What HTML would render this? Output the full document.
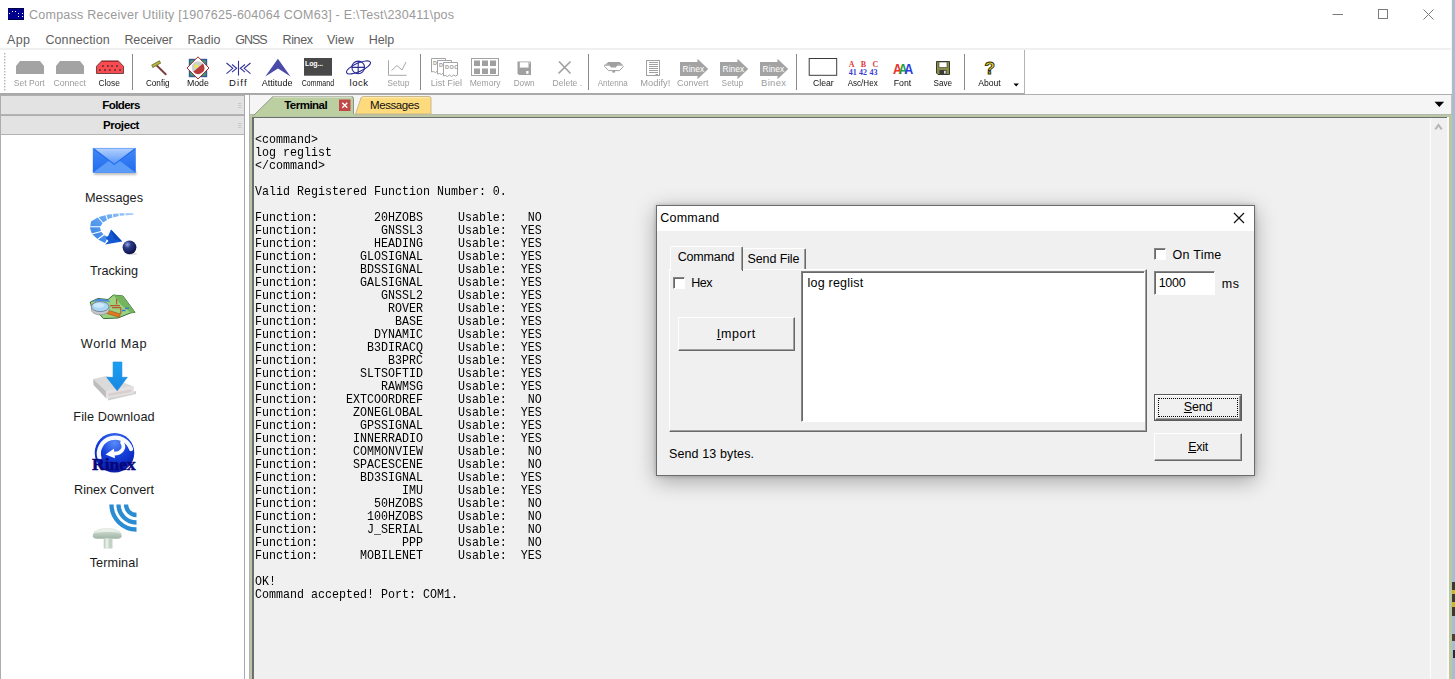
<!DOCTYPE html>
<html><head><meta charset="utf-8"><title>Compass Receiver Utility</title>
<style>
html,body{margin:0;padding:0;}
body{width:1455px;height:679px;overflow:hidden;background:#fff;position:relative;font-family:"Liberation Sans",sans-serif;font-size:12px;color:#000;}
.a{position:absolute;}
.t{position:absolute;white-space:pre;line-height:1;}
.tl{position:absolute;white-space:pre;line-height:10px;font-size:9.5px;height:10px;width:60px;text-align:center;transform-origin:50% 50%;}
.mn{position:absolute;top:33px;font-size:12.5px;line-height:15px;color:#5e5e5e;white-space:pre;}
.sb{position:absolute;left:0;width:228px;text-align:center;font-size:12.7px;line-height:14px;color:#1a1a1a;white-space:pre;letter-spacing:.3px;}
.sep{position:absolute;top:54px;width:1px;height:36px;background:#8c8c8c;}
#term{position:absolute;left:255px;top:133.5px;margin:0;font-family:"Liberation Mono",monospace;font-size:12.4px;transform:scaleX(.9409);transform-origin:0 0;line-height:13px;color:#000;white-space:pre;letter-spacing:0;}
.dl{position:absolute;white-space:pre;font-size:12.5px;line-height:14px;color:#000;}
u{text-decoration:underline;text-underline-offset:1px;}
</style></head><body>

<div class="a" style="left:0;top:0;width:1452px;height:30px;background:#fff"></div>
<svg class="a" style="left:8px;top:8px" width="16" height="12" viewBox="0 0 16 12"><rect width="16" height="12" fill="#00008e"></rect><rect width="16" height="1" fill="#000048"></rect><rect y="11" width="16" height="1" fill="#000048"></rect><g fill="#fff"><rect x="1" y="5" width="1" height="1"></rect><rect x="4" y="3" width="1" height="1"></rect><rect x="7" y="3" width="1" height="1"></rect><rect x="10" y="5" width="1" height="1"></rect><rect x="14" y="5" width="1" height="1"></rect><rect x="10" y="8" width="1" height="1"></rect><rect x="14" y="8" width="1" height="1"></rect></g></svg>
<div class="t" style="left:29px;top:8px;font-size:12.5px;line-height:15px;color:#9a9a9a;letter-spacing:.25px">Compass Receiver Utility [1907625-604064 COM63] - E:\Test\230411\pos</div>
<svg class="a" style="left:1330px;top:4px" width="115" height="22" viewBox="0 0 115 22" fill="none" stroke="#7a7a7a" stroke-width="1"><path d="M2.500 10.500h10.500"></path><rect x="48.5" y="5.5" width="9" height="9"></rect><path d="M93.5 5.5l10 10M103.5 5.5l-10 10"></path></svg>
<div class="mn" style="left: 7px; letter-spacing: 0.375px;">App</div>
<div class="mn" style="left: 45.4px; letter-spacing: 0.117px;">Connection</div>
<div class="mn" style="left: 124.5px; letter-spacing: -0.161px;">Receiver</div>
<div class="mn" style="left: 187.5px; letter-spacing: 0.082px;">Radio</div>
<div class="mn" style="left: 235.2px; letter-spacing: -0.979px;">GNSS</div>
<div class="mn" style="left: 282.5px; letter-spacing: -0.367px;">Rinex</div>
<div class="mn" style="left: 327px; letter-spacing: -0.058px;">View</div>
<div class="mn" style="left: 368.7px; letter-spacing: -0.073px;">Help</div>
<div class="a" style="left:0;top:48px;width:1452px;height:2px;background:#f0f0f0"></div>
<div class="a" style="left:0;top:50px;width:1024px;height:43px;background:#fff"></div>
<div class="a" style="left:1024px;top:50px;width:1px;height:44px;background:#b4b4b4"></div>
<div class="a" style="left:0;top:93px;width:1025px;height:2px;background:#a9a9a9"></div>
<div class="a" style="left:1025px;top:94px;width:427px;height:1px;background:#b0b0b0"></div>
<svg class="a" style="left:4px;top:53px" width="3" height="40" fill="#b5b5b5"><rect x="0" y="0" width="1.4" height="1.4"></rect><rect x="0" y="3" width="1.4" height="1.4"></rect><rect x="0" y="6" width="1.4" height="1.4"></rect><rect x="0" y="9" width="1.4" height="1.4"></rect><rect x="0" y="12" width="1.4" height="1.4"></rect><rect x="0" y="15" width="1.4" height="1.4"></rect><rect x="0" y="18" width="1.4" height="1.4"></rect><rect x="0" y="21" width="1.4" height="1.4"></rect><rect x="0" y="24" width="1.4" height="1.4"></rect><rect x="0" y="27" width="1.4" height="1.4"></rect><rect x="0" y="30" width="1.4" height="1.4"></rect><rect x="0" y="33" width="1.4" height="1.4"></rect><rect x="0" y="36" width="1.4" height="1.4"></rect></svg>
<div class="sep" style="left:132px"></div>
<div class="sep" style="left:420px"></div>
<div class="sep" style="left:588px"></div>
<div class="sep" style="left:796px"></div>
<div class="sep" style="left:964px"></div>
<div class="tl" id="tl0" style="left:-0.5px;top:78.4px;color:#9c9c9c"><span style="display: inline-block; transform: scaleX(0.903);">Set Port</span></div>
<div class="tl" id="tl1" style="left:40px;top:78.4px;color:#9c9c9c"><span style="display: inline-block; transform: scaleX(0.9183);">Connect</span></div>
<div class="tl" id="tl2" style="left:79.5px;top:78.4px;color:#222"><span style="display: inline-block; transform: scaleX(0.8849);">Close</span></div>
<div class="tl" id="tl3" style="left:127.80000000000001px;top:77.8px;color:#111"><span style="display: inline-block; transform: scaleX(0.8555);">Config</span></div>
<div class="tl" id="tl4" style="left:168px;top:78.4px;color:#111"><span style="display: inline-block; transform: scaleX(0.9257);">Mode</span></div>
<div class="tl" id="tl5" style="left:207.8px;top:78.4px;color:#111"><span style="display: inline-block; letter-spacing: 1.135px; margin-right: -1.135px;">Diff</span></div>
<div class="tl" id="tl6" style="left:247.39999999999998px;top:78.4px;color:#111"><span style="display: inline-block; transform: scaleX(0.9529);">Attitude</span></div>
<div class="tl" id="tl7" style="left:288px;top:78.4px;color:#111"><span style="display: inline-block; transform: scaleX(0.7347);">Command</span></div>
<div class="tl" id="tl8" style="left:328.8px;top:78.4px;color:#111"><span style="display: inline-block; letter-spacing: 0.498px; margin-right: -0.498px;">lock</span></div>
<div class="tl" id="tl9" style="left:368px;top:78.4px;color:#9c9c9c"><span style="display: inline-block; transform: scaleX(0.8941);">Setup</span></div>
<div class="tl" id="tl10" style="left:416.4px;top:78.4px;color:#9c9c9c"><span style="display: inline-block; transform: scaleX(0.9531);">List Fiel</span></div>
<div class="tl" id="tl11" style="left:455.4px;top:78.4px;color:#9c9c9c"><span style="display: inline-block; transform: scaleX(0.8976);">Memory</span></div>
<div class="tl" id="tl12" style="left:494.5px;top:78.4px;color:#9c9c9c"><span style="display: inline-block; transform: scaleX(0.8643);">Down</span></div>
<div class="tl" id="tl13" style="left:537.8px;top:78.4px;color:#9c9c9c"><span style="display: inline-block; transform: scaleX(0.9008);">Delete .</span></div>
<div class="tl" id="tl14" style="left:583px;top:77.8px;color:#9c9c9c"><span style="display: inline-block; transform: scaleX(0.8473);">Antenna</span></div>
<div class="tl" id="tl15" style="left:625px;top:78.4px;color:#9c9c9c"><span style="display: inline-block; transform: scaleX(0.9796);">Modify!</span></div>
<div class="tl" id="tl16" style="left:663px;top:78.4px;color:#9c9c9c"><span style="display: inline-block; transform: scaleX(0.9469);">Convert</span></div>
<div class="tl" id="tl17" style="left:702.8px;top:78.4px;color:#9c9c9c"><span style="display: inline-block; transform: scaleX(0.87);">Setup</span></div>
<div class="tl" id="tl18" style="left:743.5px;top:78.4px;color:#9c9c9c"><span style="display: inline-block; letter-spacing: 0.309px; margin-right: -0.309px;">Binex</span></div>
<div class="tl" id="tl19" style="left:793.4px;top:78.4px;color:#111"><span style="display: inline-block; transform: scaleX(0.9118);">Clear</span></div>
<div class="tl" id="tl20" style="left:833px;top:78.4px;color:#111"><span style="display: inline-block; transform: scaleX(0.8481);">Asc/Hex</span></div>
<div class="tl" id="tl21" style="left:873px;top:78.4px;color:#111"><span style="display: inline-block; transform: scaleX(0.9203);">Font</span></div>
<div class="tl" id="tl22" style="left:912.8px;top:78.4px;color:#111"><span style="display: inline-block; transform: scaleX(0.8543);">Save</span></div>
<div class="tl" id="tl23" style="left:959.8px;top:78.4px;color:#111"><span style="display: inline-block; transform: scaleX(0.9062);">About</span></div>
<svg class="a" style="left:0;top:50px" width="1024" height="43" viewBox="0 50 1024 43">
<path d="M16 74V66l4-5h20l4 5v8z" fill="#a3a3a3"></path>
<path d="M56 74V66l4-5h20l4 5v8z" fill="#a3a3a3"></path>
<path d="M96.500 73.500V66.300l5-5.200h17l5 5.200v7.200z" fill="#fb4a50" stroke="#5c3a3a" stroke-width=".9"></path>
<path d="M101.500 61.300h17" stroke="#a02c2c" stroke-width="1.200"></path>
<g fill="#5a3434"><rect x="102.0" y="65.200" width="1.800" height="1.700"></rect><rect x="107.0" y="65.200" width="1.800" height="1.700"></rect><rect x="111.1" y="65.200" width="1.800" height="1.700"></rect><rect x="116.0" y="65.200" width="1.800" height="1.700"></rect><rect x="99.0" y="69.200" width="1.800" height="1.700"></rect><rect x="104.1" y="69.200" width="1.800" height="1.700"></rect><rect x="108.89999999999999" y="69.200" width="1.800" height="1.700"></rect><rect x="114.1" y="69.200" width="1.800" height="1.700"></rect><rect x="119.1" y="69.200" width="1.800" height="1.700"></rect></g>
<path d="M157 65.800L165.700 74.300" stroke="#7a3c3c" stroke-width="1.900" stroke-linecap="round"></path>
<path d="M152 66.400L160.300 61.800" stroke="#6e6e2c" stroke-width="3.400"></path>
<path d="M152.600 66.100L159.700 62.100" stroke="#b4b440" stroke-width="1.900"></path>
<rect x="189.5" y="59.5" width="17" height="17" fill="#3aa070" stroke="#3a569a" stroke-width="1.4"></rect>
<path d="M198 56.8L209 68 198 79 187 68z" fill="#fff" stroke="#a03030" stroke-width="1"></path>
<circle cx="198" cy="67.5" r="6.3" fill="#cfcfcf"></circle>
<path d="M204.2 66.2A6.3 6.3 0 0 1 193.3 71.8L203 63.5z" fill="#b83a3a"></path>
<path d="M195 64.2l4 1.8-4 2.2z" fill="#f4f020"></path>
<g fill="none" stroke="#333399" stroke-width="1.1"><path d="M238.5 60.8V75.6"></path><path d="M226.500 63l6.300 5.300-6.300 5.300M232 64.500l4.700 3.800-4.700 3.800"></path><path d="M250.500 63l-6.300 5.300 6.300 5.300M245 64.500l-4.700 3.800 4.700 3.800"></path></g>
<path d="M277.9 58.8L290.5 76.4 278 68.5 265.3 76.4z" fill="#4a4aa8"></path>
<rect x="304" y="58" width="28" height="17.700" fill="#484848"></rect>
<text x="305" y="66" font-family="Liberation Sans" ,sans-serif="" font-size="7" font-weight="bold" fill="#fff" textLength="18" lengthAdjust="spacing">Log...</text>
<g fill="none" stroke="#2a2a9a" stroke-width="1.1"><circle cx="358.2" cy="67.4" r="6.3"></circle><path d="M358.2 61v12.8M351.9 67.4h12.6"></path><ellipse cx="358.5" cy="67.4" rx="13" ry="4.2" transform="rotate(-24 358.5 67.4)"></ellipse></g>
<g fill="none" stroke="#a8a8a8" stroke-width="1"><path d="M388.5 60.3V75.3H406.6"></path><path d="M391.5 70.5l5.5-5 5 4.5 4-8"></path></g>
<path d="M431.5 58.5h14v12.5l-2 1-2-1-2 1.5-2-1.5-2 1.5-2-1-2 .5z" fill="#fff" stroke="#a3a3a3" stroke-width="1"></path>
<path d="M437.5 60.5h14v12.5l-2 1-2-1-2 1.5-2-1.5-2 1.5-2-1-2 .5z" fill="#fff" stroke="#a3a3a3" stroke-width="1"></path>
<path d="M443.5 62.5h14v12.5l-2 1-2-1-2 1.5-2-1.5-2 1.5-2-1-2 .5z" fill="#fff" stroke="#a3a3a3" stroke-width="1"></path>
<text x="433" y="64.5" font-family="Liberation Sans" ,sans-serif="" font-size="5.500" font-weight="bold" fill="#9a9a9a">D</text><text x="439" y="66.5" font-family="Liberation Sans" ,sans-serif="" font-size="5.500" font-weight="bold" fill="#9a9a9a">D</text><text x="445" y="68.7" font-family="Liberation Sans" ,sans-serif="" font-size="5.500" font-weight="bold" fill="#9a9a9a" letter-spacing=".5">DOC</text>
<rect x="471.5" y="58.5" width="27" height="17" fill="#fff" stroke="#a3a3a3" stroke-width="1"></rect>
<g fill="#a0a0a0"><rect x="474" y="60.5" width="6" height="5.5"></rect><rect x="474" y="68.5" width="6" height="5.5"></rect><rect x="482" y="60.5" width="6" height="5.5"></rect><rect x="482" y="68.5" width="6" height="5.5"></rect><rect x="490" y="60.5" width="6" height="5.5"></rect><rect x="490" y="68.5" width="6" height="5.5"></rect></g>
<path d="M517.5 61.5h13.5v13.4h-12l-1.5-1.5z" fill="#a0a0a0"></path><rect x="519.800" y="62.300" width="8.700" height="5.300" fill="#fff"></rect><rect x="526.200" y="71" width="2.300" height="2.800" fill="#fff"></rect><rect x="529.2" y="62.3" width="1" height="1" fill="#fff"></rect>
<g stroke="#a0a0a0" stroke-width="1.6" fill="none"><path d="M559 61.5L570.5 73.5M570.5 61.5L558.5 73.5"></path></g>
<path d="M608.400 62h11.200l3 2.700h-5l-1.800 2.900h-4.800l-1.800-2.900h-4.100z" fill="#a0a0a0"></path><path d="M604 65.200h19M604.300 66.300l4.400 4.300h10.800l4.200-4.300" fill="none" stroke="#a0a0a0" stroke-width="1"></path><rect x="612.300" y="70.600" width="2.800" height="2" fill="#a0a0a0"></rect>
<rect x="646.500" y="60.500" width="13" height="15" fill="#fff" stroke="#a0a0a0" stroke-width="1"></rect><g fill="#a0a0a0"><rect x="649" y="62" width="9" height="1"></rect><rect x="649" y="64" width="9" height="1"></rect><rect x="649" y="66" width="9" height="1"></rect><rect x="649" y="68" width="9" height="1"></rect><rect x="649" y="70" width="9" height="1"></rect><rect x="649" y="72" width="9" height="1"></rect><rect x="655.500" y="74" width="2.500" height="1"></rect></g>
<path d="M680 62h17.500v-3.200l10.700 10.200-10.700 10.200v-3.200H680z" fill="#a3a3a3"></path>
<text x="682.6" y="71.700" font-family="Liberation Sans" ,sans-serif="" font-size="9" fill="#fff" textLength="21.500" lengthAdjust="spacingAndGlyphs">Rinex</text>
<path d="M720 62h17.500v-3.200l10.700 10.200-10.700 10.200v-3.200H720z" fill="#a3a3a3"></path>
<text x="722.6" y="71.700" font-family="Liberation Sans" ,sans-serif="" font-size="9" fill="#fff" textLength="21.500" lengthAdjust="spacingAndGlyphs">Rinex</text>
<path d="M760 62h17.500v-3.200l10.700 10.200-10.700 10.200v-3.200H760z" fill="#a3a3a3"></path>
<text x="762.6" y="71.700" font-family="Liberation Sans" ,sans-serif="" font-size="9" fill="#fff" textLength="21.500" lengthAdjust="spacingAndGlyphs">Rinex</text>
<rect x="809.2" y="58.500" width="27.500" height="16.800" fill="#fff" stroke="#3c3c3c" stroke-width="1"></rect>
<text x="848.7" y="66.500" font-family="'Liberation Serif',serif" font-size="8" font-weight="bold" fill="#e03c3c">A</text>
<text x="860.8" y="66.500" font-family="'Liberation Serif',serif" font-size="8" font-weight="bold" fill="#e03c3c">B</text>
<text x="872.4" y="66.500" font-family="'Liberation Serif',serif" font-size="8" font-weight="bold" fill="#e03c3c">C</text>
<text x="848.7" y="75" font-family="'Liberation Serif',serif" font-size="8.500" font-weight="bold" fill="#3c3cd2" textLength="8" lengthAdjust="spacingAndGlyphs">41</text>
<text x="858.9" y="75" font-family="'Liberation Serif',serif" font-size="8.500" font-weight="bold" fill="#3c3cd2" textLength="8" lengthAdjust="spacingAndGlyphs">42</text>
<text x="869.5" y="75" font-family="'Liberation Serif',serif" font-size="8.500" font-weight="bold" fill="#3c3cd2" textLength="8" lengthAdjust="spacingAndGlyphs">43</text>
<text x="893" y="73.800" font-family="Liberation Sans" ,sans-serif="" font-size="14" font-weight="bold" fill="#e83030" textLength="9" lengthAdjust="spacingAndGlyphs">A</text>
<text x="898.5" y="73.800" font-family="Liberation Sans" ,sans-serif="" font-size="14" font-weight="bold" fill="#20a040" textLength="9" lengthAdjust="spacingAndGlyphs">A</text>
<text x="904.3" y="73.800" font-family="Liberation Sans" ,sans-serif="" font-size="14" font-weight="bold" fill="#3040e0" textLength="9" lengthAdjust="spacingAndGlyphs">A</text>
<path d="M936.500 61.500h13v13h-11.500l-1.500-1.500z" fill="#8c8c4a" stroke="#3a3a2a" stroke-width="1"></path><rect x="939" y="62" width="8" height="5.500" fill="#fff" stroke="#3a3a2a" stroke-width=".6"></rect><rect x="939.500" y="70" width="7" height="4" fill="#3a3a3a"></rect><rect x="944" y="70.800" width="1.800" height="2.800" fill="#ddd"></rect>
<text x="984.5" y="73.800" font-family="Liberation Sans" ,sans-serif="" font-size="16" font-weight="bold" fill="#f0e020" stroke="#2a2a10" stroke-width=".9" textLength="10.500" lengthAdjust="spacingAndGlyphs">?</text>
<path d="M1013.500 83.600h5.400l-2.700 2.900z" fill="#000"></path>
</svg>
<div class="a" style="left:0;top:95px;width:245px;height:584px;background:#fff"></div>
<div class="a" style="left:0;top:95px;width:1px;height:584px;background:#adadad"></div>
<div class="a" style="left:244px;top:95px;width:1px;height:584px;background:#ababab"></div>
<div class="a" style="left:249px;top:95px;width:1px;height:584px;background:#b2b2b2"></div>
<div class="a" style="left:1px;top:95px;width:243px;height:20px;background:#e3e3e3;border-top:1.500px solid #aeaeae;border-bottom:1px solid #b4b4b4;box-sizing:border-box"></div>
<div class="t hd" style="left: 1px; width: 240px; text-align: center; top: 99px; font-size: 11.5px; font-weight: bold; line-height: 13px; letter-spacing: -0.591px; color: rgb(0, 0, 0);">Folders</div>
<svg class="a" style="left:238px;top:103px" width="4" height="6"><g fill="#c9c9c9"><rect y="0" width="3.500" height="1"></rect><rect y="2" width="3.500" height="1"></rect><rect y="4" width="3.500" height="1"></rect></g></svg>
<div class="a" style="left:1px;top:115px;width:243px;height:20px;background:#e3e3e3;border-top:1.500px solid #aeaeae;border-bottom:1px solid #b4b4b4;box-sizing:border-box"></div>
<div class="t hd" style="left: 1px; width: 240px; text-align: center; top: 119px; font-size: 11.5px; font-weight: bold; line-height: 13px; letter-spacing: -0.417px; color: rgb(0, 0, 0);">Project</div>
<svg class="a" style="left:238px;top:123px" width="4" height="6"><g fill="#c9c9c9"><rect y="0" width="3.500" height="1"></rect><rect y="2" width="3.500" height="1"></rect><rect y="4" width="3.500" height="1"></rect></g></svg>
<div class="a" style="left:1px;top:134px;width:243px;height:1px;background:#b4b4b4"></div>
<svg class="a" style="left:60px;top:136px" width="120" height="430" viewBox="60 136 120 430">
<defs>
<linearGradient id="env" x1="0" y1="0" x2="0" y2="1"><stop offset="0" stop-color="#4488f6"></stop><stop offset="1" stop-color="#1f6cf0"></stop></linearGradient><linearGradient id="flap" x1="0" y1="0" x2="0" y2="1"><stop offset="0" stop-color="#b6d2fd"></stop><stop offset="1" stop-color="#5594f8"></stop></linearGradient><filter id="bl" x="-20%" y="-100%" width="140%" height="300%"><feGaussianBlur stdDeviation=".9"></feGaussianBlur></filter>
<linearGradient id="trail" x1="1" y1="0" x2="0" y2="1"><stop offset="0" stop-color="#a6ccf8"></stop><stop offset=".45" stop-color="#62a4f0"></stop><stop offset="1" stop-color="#2f7ce6"></stop></linearGradient><radialGradient id="ball" cx=".35" cy=".3" r=".75"><stop offset="0" stop-color="#9aa6d8"></stop><stop offset=".35" stop-color="#2a3a8a"></stop><stop offset="1" stop-color="#0a1040"></stop></radialGradient>
<radialGradient id="rx" cx=".5" cy=".25" r=".8"><stop offset="0" stop-color="#5a8af8"></stop><stop offset=".45" stop-color="#1440dc"></stop><stop offset="1" stop-color="#0818a0"></stop></radialGradient>
<linearGradient id="drv" x1="0" y1="0" x2="0" y2="1"><stop offset="0" stop-color="#f2f2f2"></stop><stop offset="1" stop-color="#c8c8c8"></stop></linearGradient>
<linearGradient id="arr" x1="0" y1="0" x2="0" y2="1"><stop offset="0" stop-color="#18a2f4"></stop><stop offset="1" stop-color="#1a86e0"></stop></linearGradient>
<linearGradient id="ant" x1="0" y1="0" x2="0" y2="1"><stop offset="0" stop-color="#dfe8df"></stop><stop offset="1" stop-color="#9fb4a4"></stop></linearGradient>
</defs>
<!-- Messages envelope -->
<rect x="94" y="171.500" width="42.500" height="3.200" fill="#7a7a7a" opacity=".55" filter="url(#bl)"></rect>
<rect x="92.800" y="148" width="43" height="24.700" fill="url(#env)"></rect>
<path d="M92.800 172.700L109 160.800l5.300 3.600 5.300-3.600 16.200 11.900z" fill="#5c9cf9"></path>
<path d="M92.800 148h43L114.300 164.400z" fill="url(#flap)"></path>
<path d="M93.300 148.500L114.300 164.400 135.300 148.500" fill="none" stroke="#1f6af0" stroke-width="1.100"></path>
<path d="M92.800 148.400h43" stroke="#5f9ef9" stroke-width=".8"></path>
<!-- Tracking -->
<path d="M133.300 213.200L120 213.200 108 214.600 98 217.300 91 221.500 90 228 92 234 98 239.500 105 243 108 237 104 235 101 231.500 100 227 103 222.500 110 218.300 120 215.800 133.300 214.800z" fill="url(#trail)"></path>
<g stroke="#fff" stroke-width="1.100" fill="none">
<path d="M125 212v5M118.800 212l.600 5M112 212.500l1.200 6M105.500 213.500l2.300 7.500M97.500 216.500l6 7M89 226.700h12M90.500 234.300l11.500-3M96.500 240.300l8.300-6.300"></path>
</g>
<path d="M105.500 237.800l2.700-1.800 2.800-6.500 11.200 11.900-17.200 3.200 3.500-3.600z" fill="#1458d2"></path>
<path d="M111 229.500l11.200 11.900-8-2.400z" fill="#0c48c0"></path>
<ellipse cx="131.500" cy="253.800" rx="6" ry="1.300" fill="#c8c8d0" opacity=".6"></ellipse>
<circle cx="129.500" cy="247.300" r="6.900" fill="url(#ball)"></circle>
<!-- World map -->
<path d="M90.300 302l7.700-3.500 10 1 5.400-4.500 9.600 1 12 16.400-4 .400-13 5.200-14.600.600-3.400-3.800-8-5.800z" fill="#9ad280" stroke="#3a6a3a" stroke-width="1" stroke-linejoin="round"></path>
<path d="M113.400 295l9.600 1 12 16.400-4 .400-10-8z" fill="#74b45c"></path>
<path d="M90.800 301.800l7.200-3.100 10 1 2.500 2.500-9-1.200z" fill="#4a8ce0"></path>
<path d="M116.600 299v5.500M110 305.600h10M112 307.700h9M120.800 308v6" stroke="#b85a30" stroke-width="1.200" fill="none"></path>
<path d="M125 307.500h4v1.500h-4zM122 309.700h3.500v1.500h-3.500z" fill="#3a7ae0"></path>
<path d="M107.800 310.200l12.400 3.800-.800 3.200-12.400-3.600z" fill="#e07a22" stroke="#a85414" stroke-width=".7"></path>
<path d="M91.400 306.800v3c0 2.800 4 5 8.800 5s8.800-2.200 8.800-5v-3z" fill="#c4c8cc" stroke="#8a9096" stroke-width=".7"></path>
<ellipse cx="100.200" cy="306.600" rx="8.800" ry="5" fill="#aad6f6" stroke="#7a8894" stroke-width="1"></ellipse>
<ellipse cx="99" cy="305.200" rx="5.500" ry="2.500" fill="#d4ecfc" opacity=".8"></ellipse>
<!-- File download -->
<path d="M108 400.500l28-6.500v-3l-28 6z" fill="#9a9a9a" opacity=".45"></path>
<path d="M93.100 379l13.200-3 27.500 10.400-27.500 4.800z" fill="#dadada"></path>
<path d="M93.100 379l13.200 12.200v7.400l-12.800-13.600z" fill="#bdbdbd"></path>
<path d="M106.300 391.200l27.500-4.800v6.800l-27.500 5.400z" fill="#e6e0e0"></path>
<path d="M108.500 393.500l23-4.200v2.600l-23 4.400z" fill="#d8d0d0"></path>
<path d="M113.100 362h8.800v15.300h5.400l-10.100 13.500-10.500-13.500h6.400z" fill="url(#arr)" stroke="#1486dc" stroke-width=".6"></path>
<!-- Rinex -->
<circle cx="114.500" cy="452.800" r="19.800" fill="url(#rx)"></circle>
<path d="M99.500 458a15.500 15 0 0 1 31.500-9" fill="none" stroke="#fff" stroke-width="4.200" stroke-linecap="round" opacity=".96"></path>
<path d="M114.500 453.600c6 0 11.500-5 7.500-11.200" fill="none" stroke="#fff" stroke-width="3.600" stroke-linecap="round"></path>
<path d="M105.500 454.500l8.400-5.700 1.100 9.400z" fill="#fff"></path>
<text x="92.100" y="469.700" font-family="'Liberation Serif',serif" font-weight="bold" font-size="16.500" fill="#06067c" stroke="#06067c" stroke-width=".5" textLength="43.500" lengthAdjust="spacingAndGlyphs">Rinex</text>
<!-- Terminal -->
<g fill="none" stroke="#2a8cd2">
<path d="M111.500 504.500a25 25 0 0 0 25 25" stroke-width="4.300"></path>
<path d="M118.500 504.500a18 18 0 0 0 18 18" stroke-width="4.300"></path>
<path d="M126 504.500a10.500 10.500 0 0 0 10.500 10.500" stroke-width="4.300"></path>
</g>
<path d="M92.700 536c0-5 6.500-8 14.500-8s14.500 3 14.500 8c0 2-2 2.700-4 2.700h-21c-2 0-4-.700-4-2.700z" fill="url(#ant)"></path>
<path d="M94 533.500c2-4 9-5 13.200-5s11 1 13.200 5c-4-2-22-2-26.400 0z" fill="#eef4ee" opacity=".8"></path>
<rect x="103.700" y="538.500" width="8.800" height="10" fill="#c4d2c6"></rect>
<rect x="105.500" y="538.500" width="3" height="10" fill="#e6eee6"></rect>
</svg>
<div class="sb" style="top:191.3px"><span style="letter-spacing: 0.024px;">Messages</span></div>
<div class="sb" style="top:264px"><span style="letter-spacing: -0.028px;">Tracking</span></div>
<div class="sb" style="top:337px"><span style="letter-spacing: 0.573px;">World Map</span></div>
<div class="sb" style="top:410px"><span style="letter-spacing: 0.067px;">File Download</span></div>
<div class="sb" style="top:483px"><span style="letter-spacing: -0.033px;">Rinex Convert</span></div>
<div class="sb" style="top:556px"><span style="letter-spacing: 0.094px;">Terminal</span></div>
<div class="a" style="left:250px;top:95px;width:1202px;height:19px;background:#f5f5f5"></div>
<div class="a" style="left:250px;top:114px;width:1202px;height:565px;background:#bac7a4"></div>
<div class="a" style="left:250px;top:114px;width:1202px;height:1px;background:#b5b8ac"></div>
<div class="a" style="left:252px;top:117px;width:1196px;height:562px;background:#6e6e6e"></div>
<div class="a" style="left:253.500px;top:118px;width:1193.500px;height:561px;background:#f0f0f0"></div>
<div class="a" style="left:1447px;top:117px;width:1.500px;height:562px;background:#fbfbf6"></div>
<div class="a" style="left:1430px;top:118px;width:1px;height:561px;background:#fcfcfc"></div>
<svg class="a" style="left:1433px;top:122px" width="12" height="9"><path d="M2.300 7.300l3.200-4.300 3.200 4.300" fill="none" stroke="#b6b6b6" stroke-width="2"></path></svg>
<svg class="a" style="left:250px;top:95px" width="200" height="21" viewBox="250 95 200 21">
<path d="M253.500 116L273 96.500H351.500q2 0 2 2V116z" fill="#bccfa0"></path>
<path d="M253.500 115.500L273 96.500H351.500q2 0 2 2V114" fill="none" stroke="#858a7c" stroke-width=".9"></path>
<path d="M273 97h78.500" stroke="#e6ebe0" stroke-width="1"></path>
<path d="M355.500 114l5.500-16q.600-1.500 2.500-1.500h65.500q2 0 2 2V114z" fill="#fdda7c" stroke="#c9b98a" stroke-width="1"></path>
<path d="M362.500 97.700h67" stroke="#feecb8" stroke-width="1"></path>
<rect x="339" y="99.500" width="11.500" height="11.500" fill="#c24848"></rect>
<path d="M342.300 102.800l5 5M347.300 102.800l-5 5" stroke="#fff" stroke-width="1.400"></path>
</svg>
<div class="t tb" style="left: 284.2px; top: 99px; font-size: 11.5px; font-weight: bold; line-height: 13px; letter-spacing: -0.512px; color: rgb(0, 0, 0);">Terminal</div>
<div class="t tb" style="left: 370px; top: 99px; font-size: 11.5px; line-height: 13px; letter-spacing: -0.404px; color: rgb(17, 17, 17);">Messages</div>
<svg class="a" style="left:1434px;top:101px" width="11" height="7"><path d="M.500 .800h9.600l-4.800 5.200z" fill="#000"></path></svg>
<pre id="term">&lt;command&gt;
log reglist
&lt;/command&gt;

Valid Registered Function Number: 0.

Function:        20HZOBS     Usable:   NO
Function:         GNSSL3     Usable:  YES
Function:        HEADING     Usable:  YES
Function:      GLOSIGNAL     Usable:  YES
Function:      BDSSIGNAL     Usable:  YES
Function:      GALSIGNAL     Usable:  YES
Function:         GNSSL2     Usable:  YES
Function:          ROVER     Usable:  YES
Function:           BASE     Usable:  YES
Function:        DYNAMIC     Usable:  YES
Function:       B3DIRACQ     Usable:  YES
Function:          B3PRC     Usable:  YES
Function:      SLTSOFTID     Usable:  YES
Function:         RAWMSG     Usable:  YES
Function:    EXTCOORDREF     Usable:   NO
Function:     ZONEGLOBAL     Usable:  YES
Function:      GPSSIGNAL     Usable:  YES
Function:     INNERRADIO     Usable:  YES
Function:     COMMONVIEW     Usable:   NO
Function:     SPACESCENE     Usable:   NO
Function:      BD3SIGNAL     Usable:  YES
Function:            IMU     Usable:  YES
Function:        50HZOBS     Usable:   NO
Function:       100HZOBS     Usable:   NO
Function:       J_SERIAL     Usable:   NO
Function:            PPP     Usable:   NO
Function:      MOBILENET     Usable:  YES

OK!
Command accepted! Port: COM1.</pre>
<div class="a" style="left:1452px;top:0;width:3px;height:679px;background:#a9bdd0"></div>
<div class="a" style="left:1451px;top:0;width:1px;height:94px;background:#f4f4f4"></div><div class="a" style="left:1451px;top:95px;width:1px;height:19px;background:#c2c2c2"></div>
<div class="a" style="left:1452px;top:582px;width:3px;height:34px;background:#3a3a30"></div>
<div class="a" style="left:1452px;top:590px;width:3px;height:4px;background:#c8b830"></div>
<div class="a" style="left:1452px;top:602px;width:3px;height:5px;background:#c8b830"></div>
<div class="a" style="left:1452px;top:634px;width:3px;height:7px;background:#4a4038"></div>
<div class="a" style="left:1453px;top:650px;width:2px;height:8px;background:#2a2a30"></div>
<div class="a" style="left:656px;top:205px;width:599px;height:271px;box-shadow:0 5px 20px rgba(0,0,0,.32),0 0 4px rgba(0,0,0,.22);background:#f0f0f0"></div>
<div class="a" id="dlg" style="left:656px;top:205px;width:599px;height:271px;box-sizing:border-box;border:1px solid #6c6c6c;background:#f0f0f0"></div>
<div class="a" style="left:657px;top:206px;width:597px;height:24.500px;background:#fff"></div>
<div class="dl" style="left: 660.3px; top: 210.5px; font-size: 12.5px; letter-spacing: 0.221px;">Command</div>
<svg class="a" style="left:1232px;top:211px" width="14" height="14"><path d="M2 2l10 10M12 2L2 12" stroke="#111" stroke-width="1.200" fill="none"></path></svg>
<div class="a" style="left:669px;top:268.500px;width:478px;height:163.500px;box-sizing:border-box;border-top:1px solid #fff;border-left:1px solid #fff;border-right:1px solid #696969;border-bottom:1px solid #696969;background:#f0f0f0"></div>
<div class="a" style="left:670px;top:269.500px;width:476px;height:161.500px;box-sizing:border-box;border-right:1px solid #a0a0a0;border-bottom:1px solid #a0a0a0"></div>
<div class="a" style="left:670px;top:245.500px;width:73px;height:25px;box-sizing:border-box;border-top:1px solid #fff;border-left:1px solid #fff;border-right:1px solid #696969;background:#f0f0f0;border-radius:2px 2px 0 0"></div>
<div class="a" style="left:741px;top:246.500px;width:1px;height:23px;background:#a0a0a0"></div>
<div class="a" style="left:743px;top:248px;width:63px;height:21px;box-sizing:border-box;border-top:1px solid #fff;border-right:1px solid #696969;background:#f0f0f0;border-radius:0 2px 0 0"></div>
<div class="a" style="left:804px;top:249px;width:1px;height:20px;background:#a0a0a0"></div>
<div class="dl" style="left: 677.7px; top: 250px; letter-spacing: -0.162px;">Command</div>
<div class="dl" style="left: 747.5px; top: 252px; letter-spacing: -0.102px;">Send File</div>
<div class="a" style="left:673px;top:276.5px;width:12px;height:12px;box-sizing:border-box;background:#fff;border-top:1px solid #848484;border-left:1px solid #848484;border-right:1px solid #fff;border-bottom:1px solid #fff;box-shadow:inset 1px 1px 0 #696969"></div>
<div class="dl" style="left: 691.3px; top: 275.5px; letter-spacing: -0.467px;">Hex</div>
<div class="a" style="left:678px;top:317px;width:116.8px;height:34px;box-sizing:border-box;border-top:1px solid #fff;border-left:1px solid #fff;border-right:1px solid #696969;border-bottom:1px solid #696969;box-shadow:inset -1px -1px 0 #a0a0a0;background:#f0f0f0"></div>
<div class="dl bt" style="left:678px;width:116.8px;text-align:center;top:326.5px"><span style="letter-spacing: 0.613px;"><u>I</u>mport</span></div>
<div class="a" style="left:801px;top:271px;width:344px;height:151px;box-sizing:border-box;background:#fff;border-top:1px solid #848484;border-left:1px solid #848484;border-right:1px solid #fff;border-bottom:1px solid #fff;box-shadow:inset 1px 1px 0 #696969"></div>
<div class="dl" style="left: 807.5px; top: 275.5px; letter-spacing: 0.22px;">log reglist</div>
<div class="a" style="left:1154px;top:248px;width:12px;height:12px;box-sizing:border-box;background:#fff;border-top:1px solid #848484;border-left:1px solid #848484;border-right:1px solid #fff;border-bottom:1px solid #fff;box-shadow:inset 1px 1px 0 #696969"></div>
<div class="dl" style="left: 1172.6px; top: 247.5px; letter-spacing: 0.242px;">On Time</div>
<div class="a" style="left:1154px;top:271px;width:60.500px;height:23.500px;box-sizing:border-box;background:#fff;border-top:1px solid #848484;border-left:1px solid #848484;border-right:1px solid #fff;border-bottom:1px solid #fff;box-shadow:inset 1px 1px 0 #696969"></div>
<div class="dl" style="left: 1158.7px; top: 276px; letter-spacing: -0.271px;">1000</div>
<div class="dl" style="left: 1221.7px; top: 276.5px; letter-spacing: 0.628px;">ms</div>
<div class="a" style="left:1154px;top:393.5px;width:88px;height:27px;box-sizing:border-box;border:1px solid #5a5a5a;background:#f0f0f0"></div>
<div class="a" style="left:1155px;top:394.5px;width:86px;height:25px;box-sizing:border-box;border-top:1px solid #fff;border-left:1px solid #fff;border-right:1px solid #696969;border-bottom:1px solid #696969;box-shadow:inset -1px -1px 0 #a0a0a0"></div>
<div class="a" style="left:1158px;top:397.5px;width:80px;height:19px;box-sizing:border-box;border:1px dotted #000"></div>
<div class="dl bt" style="left:1154px;width:88px;text-align:center;top:399.5px"><span style="letter-spacing: -0.234px;"><u>S</u>end</span></div>
<div class="a" style="left:1154px;top:433px;width:88px;height:27.5px;box-sizing:border-box;border-top:1px solid #fff;border-left:1px solid #fff;border-right:1px solid #696969;border-bottom:1px solid #696969;box-shadow:inset -1px -1px 0 #a0a0a0;background:#f0f0f0"></div>
<div class="dl bt" style="left:1154px;width:88px;text-align:center;top:440.25px"><span style="letter-spacing: -0.281px;"><u>E</u>xit</span></div>
<div class="dl" style="left: 669px; top: 446.5px; letter-spacing: 0.123px;">Send 13 bytes.</div>
</body></html>
